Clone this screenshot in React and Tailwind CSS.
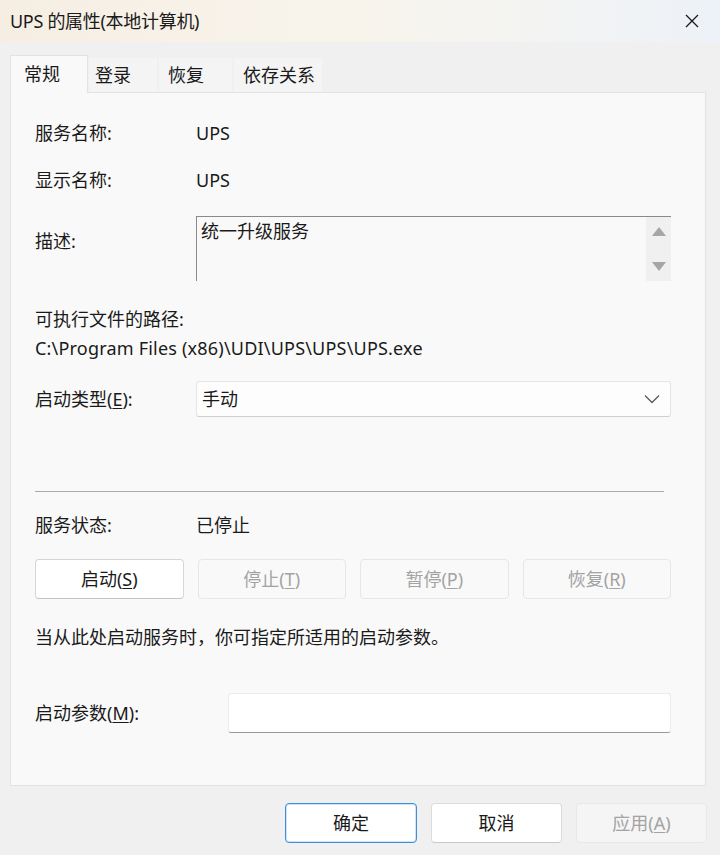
import React from 'react';

const U = ({ children }) => <span className="underline underline-offset-2">{children}</span>;

const ActionButton = ({ children, disabled }) => (
  <button
    className={
      disabled
        ? 'h-[40px] rounded-[4px] border border-[#e6e6e6] bg-[#f9f9f9] text-[#a3a3a3]'
        : 'h-[40px] rounded-[4px] border border-[#d6d6d6] border-b-[#c4c4c4] bg-white text-[#1a1a1a]'
    }
  >
    {children}
  </button>
);

const Row = ({ label, children, className = '' }) => (
  <div className={'flex items-center ' + className}>
    <div className="w-[161px] shrink-0">{label}</div>
    <div className="flex-1">{children}</div>
  </div>
);

export default function App() {
  return (
    <div className="w-[720px] h-[855px] bg-[#f0f0f0] flex flex-col text-[18px] text-[#1a1a1a] font-['Noto_Sans','Noto_Sans_CJK_SC',sans-serif] overflow-hidden">
      {/* title bar */}
      <div className="h-[42px] shrink-0 flex items-center justify-between pl-[10px] pr-[20px] bg-gradient-to-r from-[#f6eee3] via-[#f8f4ec] to-[#edf2f8]">
        <span className="text-[18px] tracking-[-0.3px]">UPS 的属性(本地计算机)</span>
        <svg width="16" height="16" viewBox="0 0 16 16" className="text-[#1a1a1a]">
          <path d="M2 2 L14 14 M14 2 L2 14" stroke="currentColor" strokeWidth="1.3" fill="none" />
        </svg>
      </div>

      {/* tabs */}
      <div className="flex items-end pl-[10px] h-[50px] shrink-0">
        <div className="w-[78px] h-[38px] pl-[13px] flex items-center bg-[#f9f9f9] border border-b-0 border-[#e3e3e3] -mb-px z-10 relative">常规</div>
        <div className="w-[68px] h-[34px] pl-[6px] ml-[1px] flex items-center bg-[#f4f4f4]">登录</div>
        <div className="w-[73px] h-[34px] pl-[9px] ml-[2px] flex items-center bg-[#f4f4f4]">恢复</div>
        <div className="w-[88px] h-[34px] pl-[9px] ml-[2px] flex items-center bg-[#f4f4f4]">依存关系</div>
      </div>

      {/* panel */}
      <div className="ml-[10px] mr-[14px] h-[694px] shrink-0 bg-[#f9f9f9] border border-[#e3e3e3] pl-[24px] pr-[34px]">
        <Row label="服务名称:" className="h-[30px] mt-[25px]">UPS</Row>
        <Row label="显示名称:" className="h-[30px] mt-[17px]">UPS</Row>

        <div className="flex items-start mt-[21px]">
          <div className="w-[161px] shrink-0 pt-[12px]">描述:</div>
          <div className="flex-1 h-[65px] flex border-t border-l border-[#8a8a8a] bg-[#f9f9f9]">
            <div className="flex-1 px-[4px] pt-[2px] leading-[24px]">统一升级服务</div>
            <div className="w-[25px] bg-[#f0f0f0] flex flex-col items-center justify-between py-[10px]">
              <svg width="14" height="9" viewBox="0 0 14 9">
                <path d="M7 0 L14 9 L0 9 Z" fill="#a6a6a6" />
              </svg>
              <svg width="14" height="9" viewBox="0 0 14 9">
                <path d="M0 0 L14 0 L7 9 Z" fill="#a6a6a6" />
              </svg>
            </div>
          </div>
        </div>

        <div className="h-[24px] mt-[26px] flex items-center">可执行文件的路径:</div>
        <div className="h-[24px] mt-[5px] flex items-center tracking-[0.2px]">C:\Program Files (x86)\UDI\UPS\UPS\UPS.exe</div>

        <Row label={<>启动类型(<U>E</U>):</>} className="mt-[21px]">
          <div className="h-[36px] bg-[#fdfdfd] border border-[#e5e5e5] border-b-[#cfcfcf] rounded-[3px] flex items-center justify-between pl-[5px] pr-[10px]">
            <span>手动</span>
            <svg width="16" height="10" viewBox="0 0 16 10">
              <path d="M1 1.5 L8 8.5 L15 1.5" stroke="#5a5a5a" strokeWidth="1.3" fill="none" />
            </svg>
          </div>
        </Row>

        <div className="h-px bg-[#a9a9a9] mt-[74px] mr-[7px]" />

        <Row label="服务状态:" className="h-[30px] mt-[18px]">已停止</Row>

        <div className="grid grid-cols-4 gap-[14px] mt-[19px]">
          <ActionButton>启动(<U>S</U>)</ActionButton>
          <ActionButton disabled>停止(<U>T</U>)</ActionButton>
          <ActionButton disabled>暂停(<U>P</U>)</ActionButton>
          <ActionButton disabled>恢复(<U>R</U>)</ActionButton>
        </div>

        <div className="h-[24px] mt-[26px] flex items-center">当从此处启动服务时，你可指定所适用的启动参数。</div>

        <div className="flex items-center mt-[44px]">
          <div className="w-[193px] shrink-0">启动参数(<U>M</U>):</div>
          <div className="flex-1 h-[40px] bg-white border border-[#ececec] border-b-[#9a9a9a] rounded-[3px]" />
        </div>
      </div>

      {/* footer */}
      <div className="flex justify-end gap-[14px] pr-[13px] mt-[17px]">
        <button className="w-[132px] h-[40px] rounded-[4px] bg-white border border-[#3f8ed8] shadow-[inset_0_0_0_1px_#cfe3f6]">确定</button>
        <button className="w-[131px] h-[40px] rounded-[4px] bg-white border border-[#dcdcdc] border-b-[#c8c8c8]">取消</button>
        <button className="w-[131px] h-[40px] rounded-[4px] bg-[#f5f5f5] border border-[#e8e8e8] text-[#a3a3a3]">应用(<U>A</U>)</button>
      </div>
    </div>
  );
}
